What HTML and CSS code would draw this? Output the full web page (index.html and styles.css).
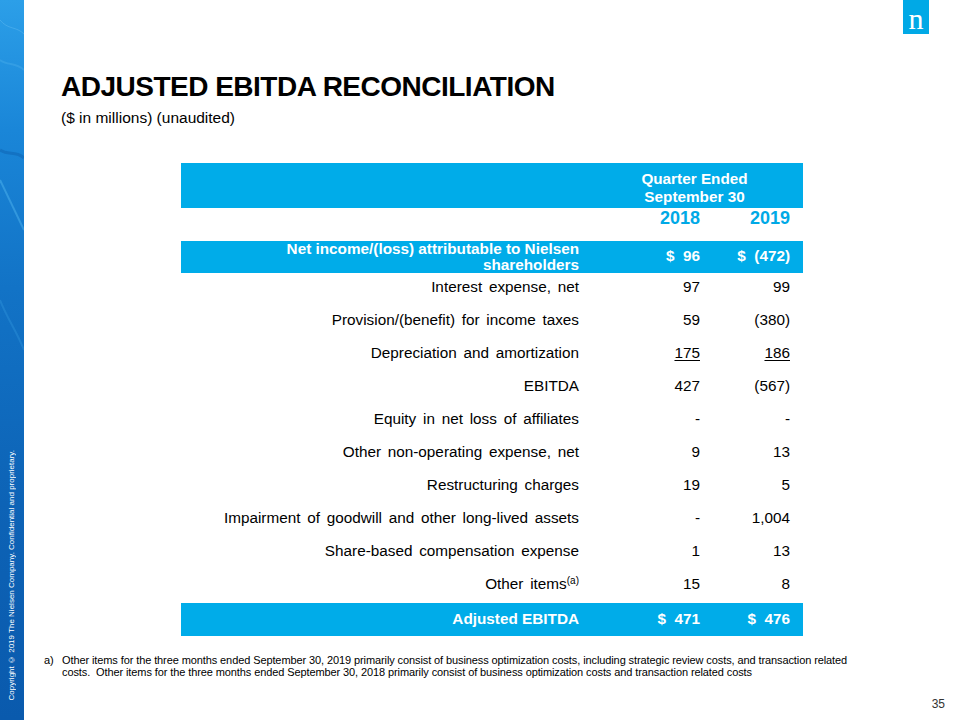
FILE: index.html
```html
<!DOCTYPE html>
<html>
<head>
<meta charset="utf-8">
<link rel="stylesheet" href="styles.css">
</head>
<body>
<aside class="sidebar">
  <svg class="waves" viewBox="0 0 24 720" preserveAspectRatio="none" aria-hidden="true">
    <path d="M0 20 C8 30 16 26 24 34" stroke="#5bb8f0" stroke-width="1" fill="none" opacity="0.5"/>
    <path d="M0 60 C8 66 16 62 24 70" stroke="#4aaeea" stroke-width="2" fill="none" opacity="0.4"/>
    <path d="M0 150 C8 156 16 150 24 158" stroke="#0b5aa8" stroke-width="3" fill="none" opacity="0.4"/>
    <path d="M0 180 L24 230" stroke="#5cc0f4" stroke-width="2" fill="none" opacity="0.4"/>
    <path d="M0 300 C8 320 16 330 24 350" stroke="#3aa2e6" stroke-width="2" fill="none" opacity="0.3"/>
  </svg>
  <div class="copyright">Copyright © 2019 The Nielsen Company. Confidential and proprietary.</div>
</aside>
<main class="main">
  <div class="topbar">
    <div class="logo"><span class="logo-n">n</span></div>
  </div>
  <h1 class="title">ADJUSTED EBITDA RECONCILIATION</h1>
  <p class="subtitle">($ in millions) (unaudited)</p>
  <table class="recon">
    <colgroup>
      <col class="c-label">
      <col class="c-v1">
      <col class="c-v2">
    </colgroup>
    <tr class="head">
      <td></td>
      <td colspan="2" class="qe">Quarter Ended<br>September 30</td>
    </tr>
    <tr class="years">
      <td></td>
      <td class="num">2018</td>
      <td class="num">2019</td>
    </tr>
    <tr class="blue first">
      <td class="label two">Net income/(loss) attributable to Nielsen<br>shareholders</td>
      <td class="num">$&nbsp; 96</td>
      <td class="num">$&nbsp; (472)</td>
    </tr>
    <tr><td class="label">Interest expense, net</td><td class="num">97</td><td class="num">99</td></tr>
    <tr><td class="label">Provision/(benefit) for income taxes</td><td class="num">59</td><td class="num">(380)</td></tr>
    <tr><td class="label">Depreciation and amortization</td><td class="num"><u>175</u></td><td class="num"><u>186</u></td></tr>
    <tr><td class="label">EBITDA</td><td class="num">427</td><td class="num">(567)</td></tr>
    <tr><td class="label">Equity in net loss of affiliates</td><td class="num">-</td><td class="num">-</td></tr>
    <tr><td class="label">Other non-operating expense, net</td><td class="num">9</td><td class="num">13</td></tr>
    <tr><td class="label">Restructuring charges</td><td class="num">19</td><td class="num">5</td></tr>
    <tr><td class="label">Impairment of goodwill and other long-lived assets</td><td class="num">-</td><td class="num">1,004</td></tr>
    <tr><td class="label">Share-based compensation expense</td><td class="num">1</td><td class="num">13</td></tr>
    <tr><td class="label">Other items<sup>(a)</sup></td><td class="num">15</td><td class="num">8</td></tr>
    <tr class="blue total">
      <td class="label">Adjusted EBITDA</td>
      <td class="num">$&nbsp; 471</td>
      <td class="num">$&nbsp; 476</td>
    </tr>
  </table>
  <div class="footnote">
    <span class="fn-mark">a)</span>
    <p class="fn-text">Other items for the three months ended September 30, 2019 primarily consist of business optimization costs, including strategic review costs, and transaction related costs.&nbsp; Other items for the three months ended September 30, 2018 primarily consist of business optimization costs and transaction related costs</p>
  </div>
  <div class="pagenum">35</div>
</main>
</body>
</html>
```

FILE: styles.css
```css
html, body {
  margin: 0;
  padding: 0;
}

body {
  width: 960px;
  height: 720px;
  display: flex;
  background: #ffffff;
  font-family: "Liberation Sans", Arial, sans-serif;
  color: #000000;
  overflow: hidden;
}

.sidebar {
  position: relative;
  width: 24px;
  flex: 0 0 24px;
  height: 720px;
  background: linear-gradient(180deg, #2c9fe8 0%, #1a86d8 18%, #1273c6 40%, #0d63b6 70%, #0a5aad 100%);
  display: flex;
  flex-direction: column;
  justify-content: flex-end;
  align-items: center;
  overflow: hidden;
}

.waves {
  position: absolute;
  left: 0;
  top: 0;
  width: 24px;
  height: 720px;
}

.copyright {
  position: relative;
  writing-mode: vertical-rl;
  transform: rotate(180deg);
  color: #ffffff;
  font-size: 8px;
  line-height: 10px;
  white-space: nowrap;
  margin-bottom: 20px;
}

.main {
  flex: 1;
  display: flex;
  flex-direction: column;
  min-width: 0;
}

.topbar {
  height: 34px;
  display: flex;
  justify-content: flex-end;
  padding-right: 31px;
}

.logo {
  width: 26px;
  height: 34px;
  background: #00a9e6;
  display: flex;
  justify-content: center;
  align-items: center;
  padding-top: 4px;
  box-sizing: border-box;
}

.logo-n {
  color: #ffffff;
  font-family: "Liberation Serif", "Times New Roman", serif;
  font-size: 30px;
  line-height: 28px;
  display: block;
}

.title {
  margin: 37px 0 0 37px;
  font-size: 28px;
  line-height: 32px;
  font-weight: bold;
  letter-spacing: -0.5px;
}

.subtitle {
  margin: 6px 0 0 37px;
  font-size: 15.5px;
  line-height: 18px;
}

.recon {
  margin: 36px 0 0 157px;
  width: 622px;
  border-collapse: collapse;
  border-spacing: 0;
  table-layout: fixed;
  font-size: 15.3px;
}

.c-label { width: 409px; }
.c-v1 { width: 120px; }
.c-v2 { width: 93px; }

.recon td {
  height: 33px;
  padding: 4.5px 0 0 0;
  box-sizing: border-box;
  vertical-align: top;
  line-height: 18px;
  word-spacing: 2.5px;
}

.recon .label {
  text-align: right;
  padding-right: 11px;
}

.recon .num {
  text-align: right;
  padding-right: 10px;
}

.recon td.num:last-child {
  padding-right: 13px;
}

.recon u {
  text-decoration: underline;
  text-underline-offset: 2px;
}

.recon sup {
  font-size: 10px;
  line-height: 0;
  vertical-align: 5px;
}

.head td {
  height: 45px;
  background: #00ace9;
  color: #ffffff;
  font-weight: bold;
  padding: 7px 0 0 0;
}

.head .qe {
  text-align: center;
  padding-right: 4px;
  word-spacing: 0;
}

.years td {
  height: 33px;
  font-size: 18px;
  font-weight: bold;
  color: #00a9e6;
  padding-top: 1px;
  word-spacing: 0;
}

.blue td {
  background: #00ace9;
  color: #ffffff;
  font-weight: bold;
  word-spacing: 0;
  height: 33px;
  vertical-align: middle;
  padding-top: 0;
  padding-bottom: 2px;
}

.blue.first td {
  height: 32px;
}

.blue .two {
  line-height: 16px;
  padding-bottom: 0;
  padding-top: 0;
}

.footnote {
  margin: 18px 0 0 20px;
  display: flex;
  font-family: "Liberation Sans Narrow", "Liberation Sans", Arial, sans-serif;
  font-size: 11px;
  line-height: 12px;
  letter-spacing: -0.1px;
  width: 820px;
}

.fn-mark {
  flex: 0 0 18px;
}

.fn-text {
  margin: 0;
  flex: 1;
}

.pagenum {
  margin-top: auto;
  align-self: flex-end;
  padding: 0 15px 9px 0;
  font-size: 12px;
  line-height: 14px;
  color: #333333;
}
```
